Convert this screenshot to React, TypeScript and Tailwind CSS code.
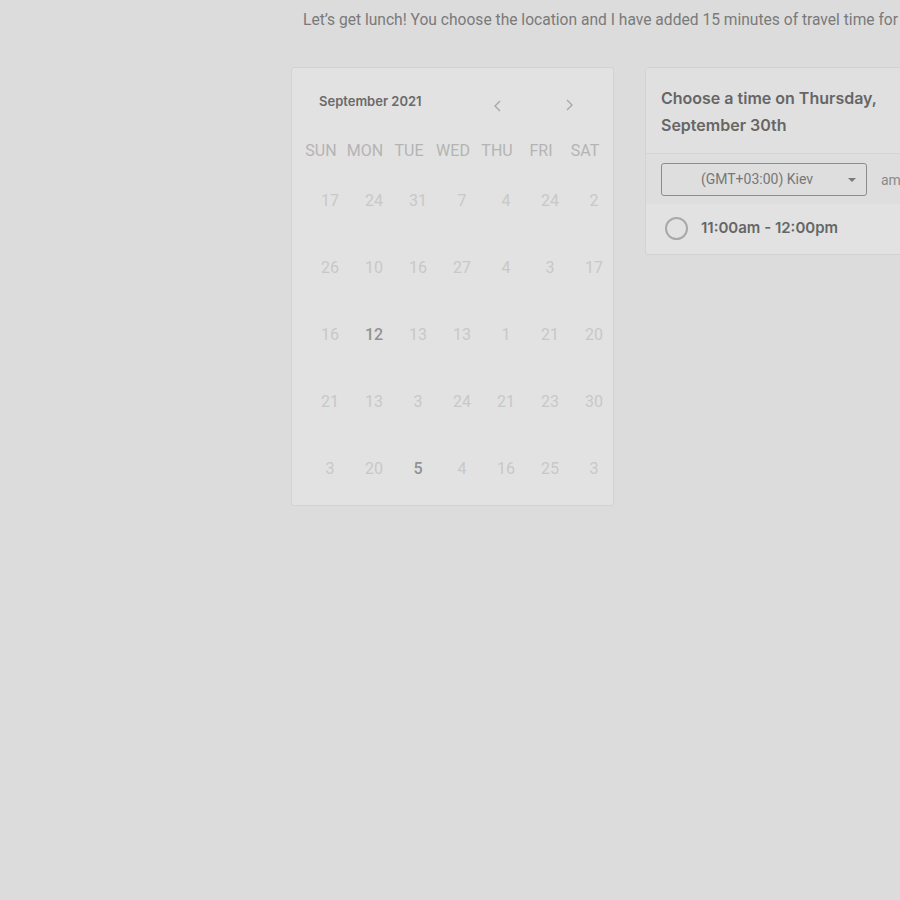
import React from "react";

const weeks = [
  ["17", "24", "31", "7", "4", "24", "2"],
  ["26", "10", "16", "27", "4", "3", "17"],
  ["16", "12", "13", "13", "1", "21", "20"],
  ["21", "13", "3", "24", "21", "23", "30"],
  ["3", "20", "5", "4", "16", "25", "3"],
];
const days = ["SUN", "MON", "TUE", "WED", "THU", "FRI", "SAT"];

export default function App() {
  return (
    <div
      className="w-[900px] h-[900px] overflow-hidden bg-[#dcdcdc]"
      style={{ fontFamily: "Roboto, 'Liberation Sans', sans-serif" }}
    >
      <div className="pl-[303px] pt-[10px] h-[67px] whitespace-nowrap text-[15.6px] leading-[20px] text-[#7a7a7a]">
        Let’s get lunch! You choose the location and I have added 15 minutes of travel time for you.
      </div>
      <div className="flex pl-[291px] gap-[31px] items-start">
        {/* Calendar */}
        <div className="w-[323px] h-[439px] shrink-0 bg-[#e2e2e2] border border-[#d2d2d2] rounded-[3px]">
          <div className="flex items-center h-[68px] pl-[27px] pb-[2px]">
            <div
              className="text-[13px] font-semibold text-[#6a6a6a] w-[172px] mt-[1px]"
              style={{ fontFamily: "Inter, 'Liberation Sans', sans-serif" }}
            >
              September 2021
            </div>
            <svg width="14" height="14" viewBox="0 0 14 14" className="mt-[9px]">
              <path d="M9 2 L4 7 L9 12" fill="none" stroke="#a8a8a8" strokeWidth="1.4" />
            </svg>
            <svg width="14" height="14" viewBox="0 0 14 14" className="ml-[57px] mt-[7px]">
              <path d="M5 2 L10 7 L5 12" fill="none" stroke="#a8a8a8" strokeWidth="1.4" />
            </svg>
          </div>
          <div className="grid grid-cols-7 w-[308px] ml-[7px] h-[28px] items-center pt-[2px]">
            {days.map((d) => (
              <div key={d} className="text-center text-[16px] text-[#b4b4b4]">
                {d}
              </div>
            ))}
          </div>
          <div className="ml-[16px] w-[308px] mt-[18px]">
            {weeks.map((w, i) => (
              <div key={i} className="grid grid-cols-7 h-[67px] items-start pt-[7px]">
                {w.map((n, j) => {
                  const dark = (i === 2 && j === 1) || (i === 4 && j === 2);
                  return (
                    <div
                      key={j}
                      className={
                        "text-center text-[16px] leading-[24px] " +
                        (dark ? "text-[#929292] font-medium" : "text-[#c8c8c8]")
                      }
                    >
                      {n}
                    </div>
                  );
                })}
              </div>
            ))}
          </div>
        </div>
        {/* Time card */}
        <div className="w-[300px] shrink-0 bg-[#e2e2e2] border border-[#d2d2d2] rounded-[3px]">
          <div
            className="px-[15px] pt-[17px] pb-[14px] text-[16px] leading-[27px] font-semibold text-[#666] border-b border-[#d4d4d4] bg-[#e0e0e0]"
            style={{ fontFamily: "Inter, 'Liberation Sans', sans-serif" }}
          >
            Choose a time on Thursday,
            <br />
            September 30th
          </div>
          <div className="flex items-start h-[50px] pl-[15px] pt-[9px] bg-[#dedede]">
            <div className="relative w-[206px] h-[33px] border border-[#8c8c8c] rounded-[3px] flex items-center justify-center text-[14px] text-[#777]">
              <span className="mr-[14px]">(GMT+03:00) Kiev</span>
              <svg width="8" height="5" viewBox="0 0 8 5" className="absolute right-[10px] top-[14px]">
                <path d="M0 0 L8 0 L4 4 Z" fill="#7a7a7a" />
              </svg>
            </div>
            <span className="ml-[14px] mt-[7px] text-[14px] text-[#8a8a8a]">am/pm</span>
          </div>
          <div className="flex items-center h-[50px] pl-[19px] pb-[2px]">
            <div className="w-[23px] h-[23px] rounded-full border-2 border-[#a9a9a9]" />
            <span
              className="ml-[13px] text-[15px] font-semibold text-[#666]"
              style={{ fontFamily: "Inter, 'Liberation Sans', sans-serif" }}
            >
              11:00am - 12:00pm
            </span>
          </div>
        </div>
      </div>
    </div>
  );
}
